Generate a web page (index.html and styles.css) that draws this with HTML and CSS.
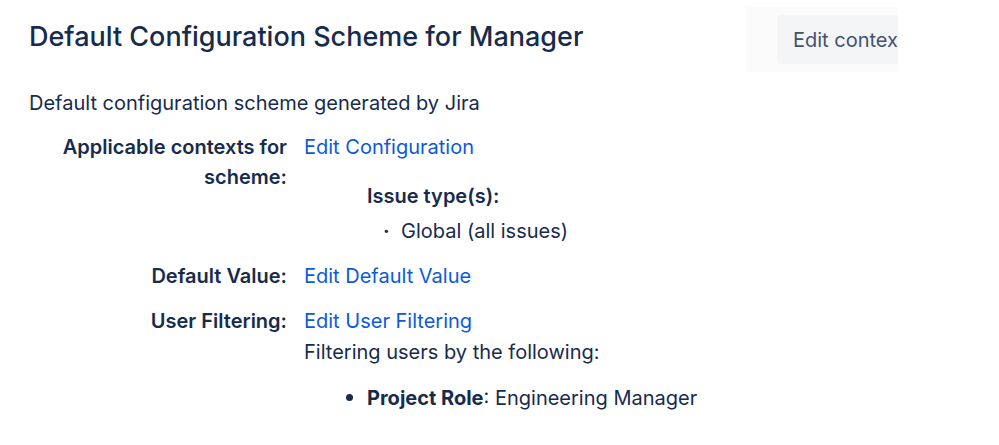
FILE: index.html
```html
<!DOCTYPE html>
<html lang="en">
<head>
    <meta charset="UTF-8">
    <title>Default Configuration Scheme for Manager</title>
    <link rel="stylesheet" href="styles.css">
</head>
<body>
    <div class="page">
        <div class="page-header">
            <h1 class="page-title">Default Configuration Scheme for Manager</h1>
            <div class="header-actions">
                <button class="edit-button">Edit context</button>
            </div>
        </div>

        <p class="description">Default configuration scheme generated by Jira</p>

        <div class="field-table">
            <div class="field-label">Applicable contexts for scheme:</div>
            <div class="field-value">
                <a href="#" class="link">Edit Configuration</a>
                <div class="issue-types">
                    <div class="issue-title">Issue type(s):</div>
                    <ul class="issue-list">
                        <li>Global (all issues)</li>
                    </ul>
                </div>
            </div>

            <div class="field-label">Default Value:</div>
            <div class="field-value">
                <a href="#" class="link">Edit Default Value</a>
            </div>

            <div class="field-label">User Filtering:</div>
            <div class="field-value">
                <a href="#" class="link">Edit User Filtering</a>
                <div class="filter-text">Filtering users by the following:</div>
                <ul class="filter-list">
                    <li><strong>Project Role</strong>: Engineering Manager</li>
                </ul>
            </div>
        </div>
    </div>
</body>
</html>
```

FILE: styles.css
```css
* {
    margin: 0;
    padding: 0;
    box-sizing: border-box;
}

body {
    background: #ffffff;
    color: #172b4d;
    font-family: Inter, "Liberation Sans", sans-serif;
    font-size: 20px;
}

.page {
    width: 898px;
    padding-left: 29px;
}

.page-header {
    display: flex;
    justify-content: space-between;
    align-items: flex-start;
    height: 72px;
}

.page-title {
    font-size: 27px;
    font-weight: 500;
    line-height: 32px;
    margin-top: 21px;
    color: #172b4d;
}

/* the action button is cut off by the panel edge, as in the app */
.header-actions {
    width: 152px;
    margin-top: 7px;
    padding: 8px 0 8px 31px;
    background: #fbfbfb;
    overflow: hidden;
}

.edit-button {
    display: block;
    width: 140px;
    height: 49px;
    padding-left: 16px;
    text-align: left;
    border: none;
    border-radius: 4px;
    background: #f4f5f7;
    color: #42526e;
    font-family: Inter, "Liberation Sans", sans-serif;
    font-size: 20px;
    white-space: nowrap;
}

.description {
    margin-top: 18px;
    line-height: 26px;
}

.field-table {
    display: grid;
    grid-template-columns: 258px 1fr;
    column-gap: 17px;
    margin-top: 16px;
    line-height: 30px;
}

.field-label {
    text-align: right;
    font-weight: 600;
    margin-bottom: 15px;
}

.field-value {
    margin-bottom: 15px;
}

.link {
    color: #0c5ad9;
    text-decoration: none;
}

.issue-types {
    padding-left: 63px;
    margin-top: 19px;
}

.issue-title {
    font-weight: 600;
}

.issue-list {
    list-style: none;
    margin-top: 5px;
    padding-left: 16px;
}

.issue-list li::before {
    content: "\00B7";
    display: inline-block;
    width: 18px;
    font-weight: 700;
}

.filter-text {
    margin-top: 1px;
}

.filter-list {
    margin-top: 15px;
    padding-left: 63px;
}

.filter-list li::marker {
    font-size: 22px;
}
```
